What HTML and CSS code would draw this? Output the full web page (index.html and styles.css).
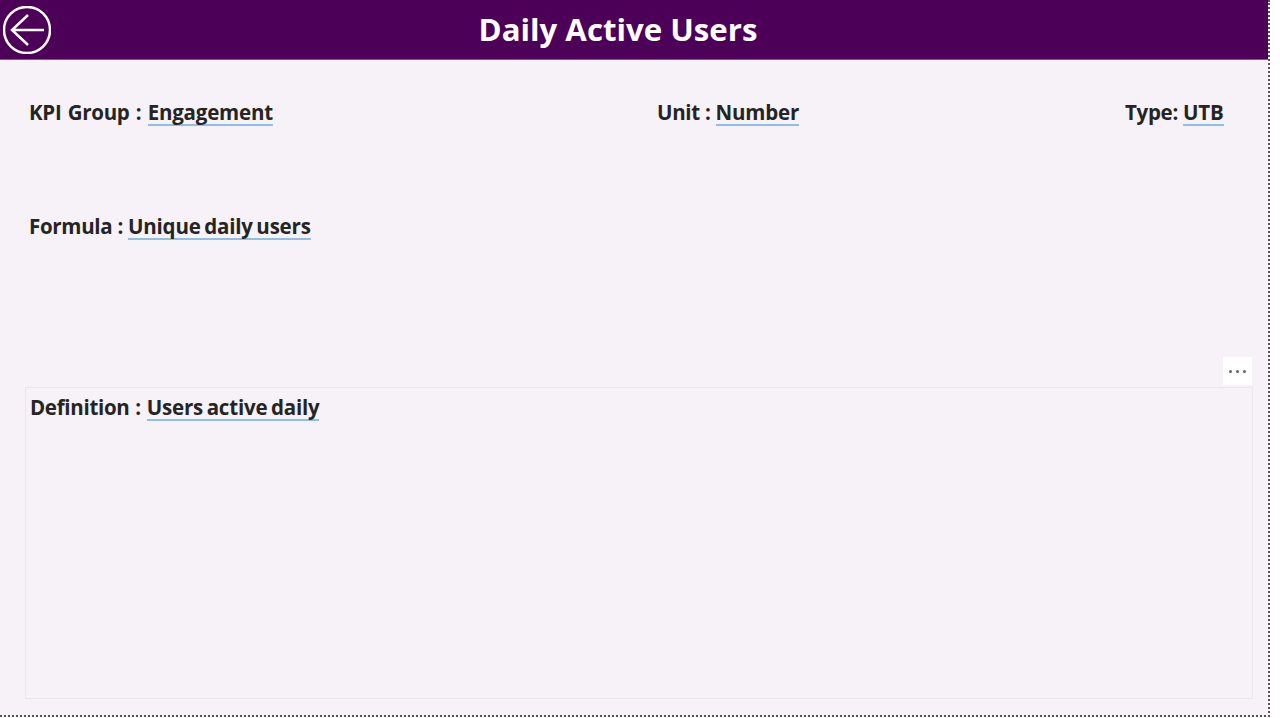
FILE: index.html
```html
<html>
<head>
  <link rel="stylesheet" href="styles.css">
</head>
<body>
  <div class="canvas">
    <div class="header">
      <svg class="back" width="48" height="48" viewBox="0 0 48 48">
        <circle cx="24" cy="24" r="23" fill="none" stroke="#fff" stroke-width="2.500"/>
        <path d="M41 24 H9 M25 9 L9 24 L25 39" fill="none" stroke="#fff" stroke-width="2.500"/>
      </svg>
      <div class="title">Daily Active Users</div>
    </div>
    <div class="info-row">
      <div class="field kpi">KPI Group : <span class="value">Engagement</span></div>
      <div class="field">Unit : <span class="value">Number</span></div>
      <div class="field">Type: <span class="value">UTB</span></div>
    </div>
    <div class="formula">
      <div class="field">Formula : <span class="value">Unique daily users</span></div>
    </div>
    <div class="definition">
      <div class="more"><span class="dot"></span><span class="dot"></span><span class="dot"></span></div>
      <div class="field">Definition : <span class="value">Users active daily</span></div>
    </div>
  </div>
</body>
</html>
```

FILE: styles.css
```css
body {
  margin: 0;
  background-color: white;
  font-family: "Open Sans", "Noto Sans", sans-serif;
}
.canvas {
  width: 1268px;
  height: 715px;
  background-color: #f6f2f8;
  border-right: 2px dotted #555;
  border-bottom: 2px dotted #555;
  overflow: hidden;
}
.header {
  height: 59px;
  display: flex;
  align-items: center;
  padding-left: 3px;
  background-color: #4d0058;
  border-bottom: 1px solid #6a5cb8;
}
.back {
  flex: none;
}
.title {
  width: 1134px;
  margin-top: -1px;
  text-align: center;
  color: white;
  font-size: 31.200px;
  font-weight: 700;
}
.info-row {
  display: grid;
  grid-template-columns: 628px 468px auto;
  margin-top: 37px;
  padding-left: 29px;
}
.info-row .field:last-child {
  white-space: nowrap;
}
.formula {
  margin-top: 82px;
  padding-left: 29px;
}
.field {
  height: 32px;
  line-height: 30px;
  font-size: 20.500px;
  font-weight: 700;
  letter-spacing: -0.300px;
  color: #252423;
}
.kpi {
  word-spacing: 1.300px;
}
.value {
  display: inline-block;
  height: 27px;
  border-bottom: 2px solid #8cc0e8;
  letter-spacing: -0.200px;
  word-spacing: -1.500px;
}
.definition {
  position: relative;
  width: 1228px;
  height: 312px;
  margin-top: 144px;
  margin-left: 25px;
  padding-left: 4px;
  box-sizing: border-box;
  border: 1px solid #ebe6ee;
  word-spacing: 0.800px;
}
.definition .field {
  margin-top: 4px;
}
.more {
  position: absolute;
  right: 0;
  top: -31px;
  width: 29px;
  height: 28px;
  display: flex;
  align-items: center;
  justify-content: center;
  gap: 4px;
  background-color: white;
}
.dot {
  width: 3px;
  height: 3px;
  border-radius: 50%;
  background-color: #666;
}
```
